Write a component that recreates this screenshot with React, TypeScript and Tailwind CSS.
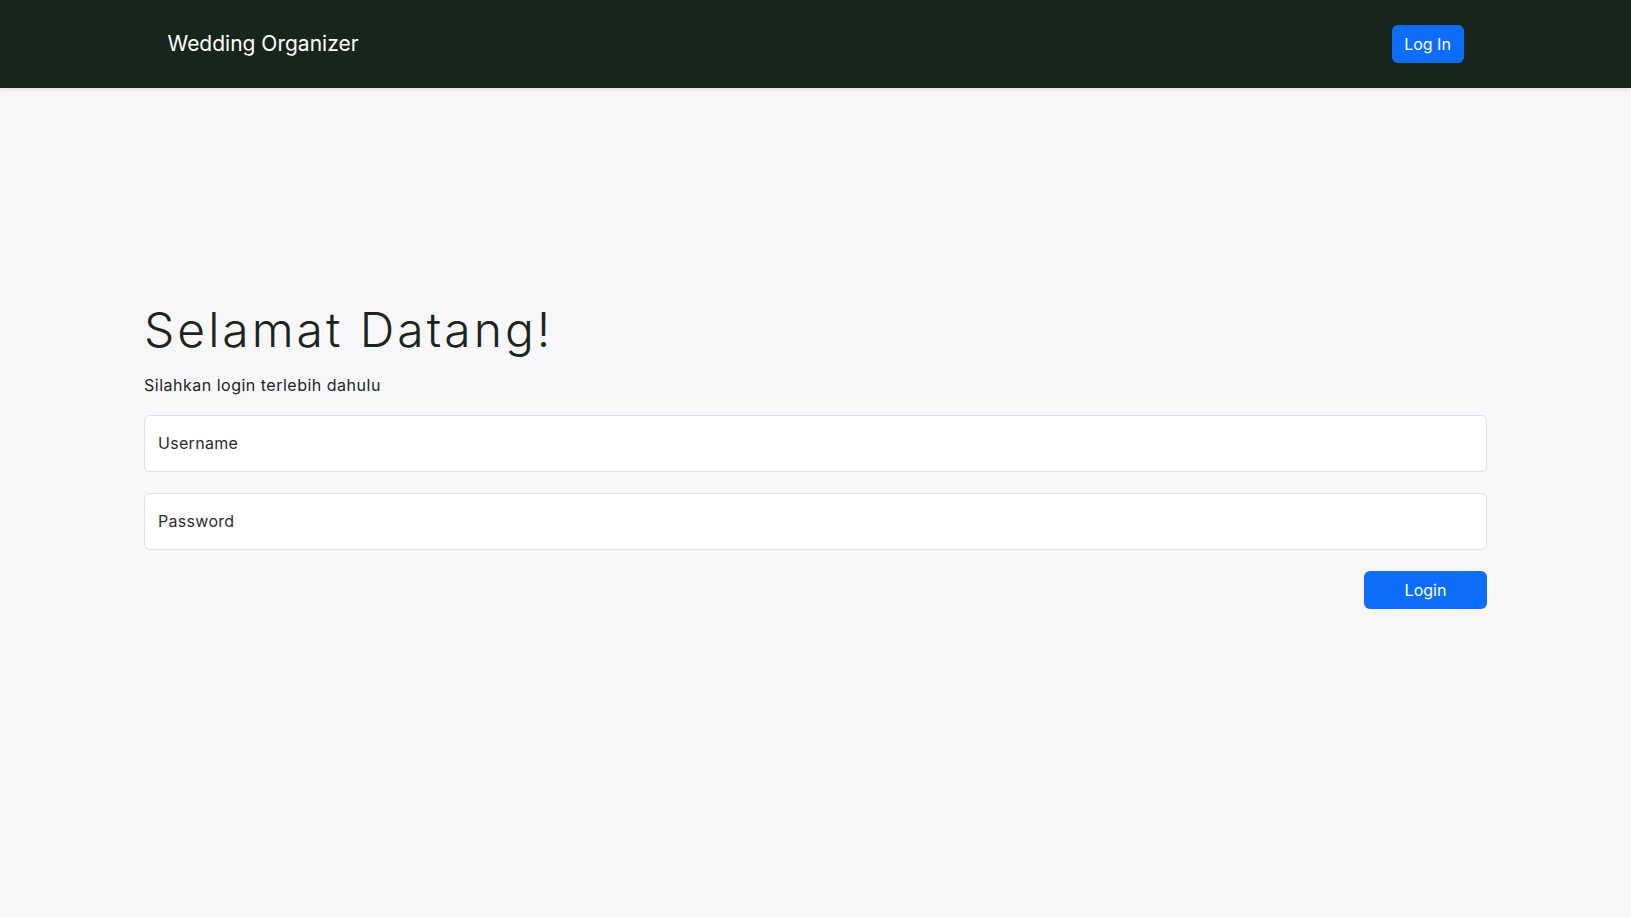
import { useState } from "react";

export default function App() {
  const [username, setUsername] = useState("");
  const [password, setPassword] = useState("");

  return (
    <div className="min-h-screen bg-[#f7f7f9] font-['Inter',sans-serif] text-[#1a261c]">
      <nav className="h-[88px] bg-[#18251a] shadow-[0_2px_3px_rgba(0,0,0,0.08)]">
        <div className="mx-auto flex h-full w-[1296px] items-center justify-between">
          <a href="#" className="text-[21px] text-white">
            Wedding Organizer
          </a>
          <button className="h-[38px] w-[72px] rounded-[6px] bg-[#0d6efd] text-[16px] text-white">
            Log In
          </button>
        </div>
      </nav>

      <main className="mx-auto w-[1343px] pt-[213px]">
        <h1 className="text-[48px] font-light leading-[1.2] tracking-[3px]">Selamat Datang!</h1>
        <p className="mt-[14px] text-[16px] tracking-[0.5px]">Silahkan login terlebih dahulu</p>

        <form className="mt-[18px] flex flex-col gap-[21px]" onSubmit={(e) => e.preventDefault()}>
          <input
            className="h-[57px] w-full rounded-[6px] border border-[#dcdfe3] bg-white px-[13px] text-[16px] tracking-[0.3px] placeholder:text-[#2b2b2b] focus:outline-none"
            placeholder="Username"
            value={username}
            onChange={(e) => setUsername(e.target.value)}
          />
          <input
            type="password"
            className="h-[57px] w-full rounded-[6px] border border-[#dcdfe3] bg-white px-[13px] text-[16px] tracking-[0.3px] placeholder:text-[#2b2b2b] focus:outline-none"
            placeholder="Password"
            value={password}
            onChange={(e) => setPassword(e.target.value)}
          />
          <div className="flex justify-end">
            <button className="h-[38px] w-[123px] rounded-[6px] bg-[#0d6efd] text-[16px] text-white">
              Login
            </button>
          </div>
        </form>
      </main>
    </div>
  );
}
